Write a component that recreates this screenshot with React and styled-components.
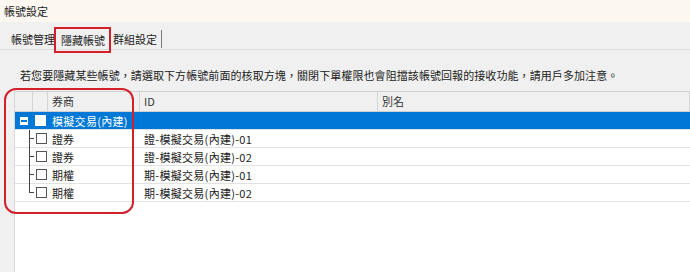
import React from "react";
import styled, { createGlobalStyle } from "styled-components";

const GlobalStyle = createGlobalStyle`
  html, body {
    margin: 0;
    padding: 0;
    background: #f0f0f0;
  }
  body {
    font-family: "Noto Sans CJK TC", "Noto Sans", sans-serif;
    color: #1a1a1a;
  }
`;

const Window = styled.div`
  position: relative;
  width: 690px;
  height: 272px;
  overflow: hidden;
  background: #f0f0f0;
  display: flex;
  flex-direction: column;
`;

const TitleBar = styled.div`
  height: 22px;
  line-height: 22px;
  padding-left: 4px;
  font-size: 11px;
  background: #fcf7f0;
  color: #222;
`;

const TabStrip = styled.div`
  height: 28px;
  box-sizing: border-box;
  display: flex;
  align-items: flex-end;
  padding-left: 11px;
  border-bottom: 1px solid #dcdcdc;
  font-size: 11px;
`;

const Tab = styled.div`
  height: 18px;
  line-height: 18px;
  margin-bottom: 1px;
  box-sizing: border-box;
  color: #222;
  white-space: nowrap;
`;

const SelectedTab = styled(Tab)`
  height: 26px;
  line-height: 22px;
  margin: 0 2px -4px -1px;
  padding: 0 4px 0 5px;
  border: 2px solid #d3202b;
  position: relative;
  z-index: 1;
`;

const LastTab = styled(Tab)`
  padding-right: 4px;
  border-right: 1px solid #7a7a7a;
`;

const Content = styled.div`
  flex: 1;
  display: flex;
  flex-direction: column;
  padding-left: 14px;
`;

const Notice = styled.div`
  font-size: 11px;
  letter-spacing: 0.08px;
  color: #222;
  padding: 17px 0 8px 6px;
  line-height: 16px;
  white-space: nowrap;
`;

const Table = styled.div`
  flex: 1;
  background: #fff;
  border-top: 1px solid #d0d0d0;
  border-left: 1px solid #d8d8d8;
  font-size: 11px;
`;

const Row = styled.div`
  display: grid;
  grid-template-columns: 18px 15px 92px 238px 1fr;
  height: 17px;
  align-items: stretch;
  border-bottom: 1px solid #e2e2e2;
  background: ${(p) => (p.$selected ? "#0078d7" : "#fff")};
  color: ${(p) => (p.$selected ? "#fff" : "#1a1a1a")};
`;

const HeaderRow = styled(Row)`
  height: 19px;
  background: #f0f0f0;
  border-bottom: 1px solid #d0d0d0;
`;

const HeadCell = styled.div`
  border-right: 1px solid #d5d5d5;
  padding-left: 4px;
  line-height: 19px;
  white-space: nowrap;
  color: #333;
`;

const Cell = styled.div`
  position: relative;
  padding-left: ${(p) => (p.$pad ? "4px" : "0")};
  letter-spacing: ${(p) => (p.$wide ? "0.3px" : "0")};
  white-space: nowrap;
  display: flex;
  align-items: center;
`;

const Expander = styled.div`
  width: 8px;
  height: 8px;
  margin-left: 5px;
  background: #fff;
  position: relative;
  &::after {
    content: "";
    position: absolute;
    left: 1px;
    right: 1px;
    top: 3px;
    height: 2px;
    background: #0078d7;
  }
`;

const Check = styled.div`
  width: 11px;
  height: 11px;
  box-sizing: border-box;
  border: 1px solid ${(p) => (p.$selected ? "#fff" : "#555")};
  background: #fff;
  margin-left: ${(p) => (p.$selected ? "2px" : "3px")};
`;

const Branch = styled.div`
  position: absolute;
  left: 14px;
  top: 0;
  width: 5px;
  height: ${(p) => (p.$last ? "9px" : "18px")};
  border-left: 1px solid #444;
  &::after {
    content: "";
    position: absolute;
    left: 0;
    top: 8px;
    width: 4px;
    border-top: 1px solid #444;
  }
`;

const Annotation = styled.div`
  position: absolute;
  left: 4px;
  top: 88px;
  width: 130px;
  height: 126px;
  box-sizing: border-box;
  border: 2px solid #d3202b;
  border-radius: 12px;
  pointer-events: none;
`;

const children = [
  { broker: "證券", id: "證-模擬交易(內建)-01" },
  { broker: "證券", id: "證-模擬交易(內建)-02" },
  { broker: "期權", id: "期-模擬交易(內建)-01" },
  { broker: "期權", id: "期-模擬交易(內建)-02" },
];

export default function App() {
  return (
    <>
      <GlobalStyle />
      <Window>
        <TitleBar>帳號設定</TitleBar>
        <TabStrip>
          <Tab>帳號管理</Tab>
          <SelectedTab>隱藏帳號</SelectedTab>
          <LastTab>群組設定</LastTab>
        </TabStrip>
        <Content>
          <Notice>
            若您要隱藏某些帳號，請選取下方帳號前面的核取方塊，關閉下單權限也會阻擋該帳號回報的接收功能，請用戶多加注意。
          </Notice>
          <Table>
            <HeaderRow>
              <HeadCell />
              <HeadCell />
              <HeadCell>券商</HeadCell>
              <HeadCell>ID</HeadCell>
              <HeadCell>別名</HeadCell>
            </HeaderRow>
            <Row $selected>
              <Cell>
                <Expander />
              </Cell>
              <Cell>
                <Check $selected />
              </Cell>
              <Cell $pad $wide>模擬交易(內建)</Cell>
              <Cell />
              <Cell />
            </Row>
            {children.map((c, i) => (
              <Row key={i}>
                <Cell>
                  <Branch $last={i === children.length - 1} />
                </Cell>
                <Cell>
                  <Check />
                </Cell>
                <Cell $pad>{c.broker}</Cell>
                <Cell $pad $wide>{c.id}</Cell>
                <Cell />
              </Row>
            ))}
          </Table>
        </Content>
        <Annotation />
      </Window>
    </>
  );
}
